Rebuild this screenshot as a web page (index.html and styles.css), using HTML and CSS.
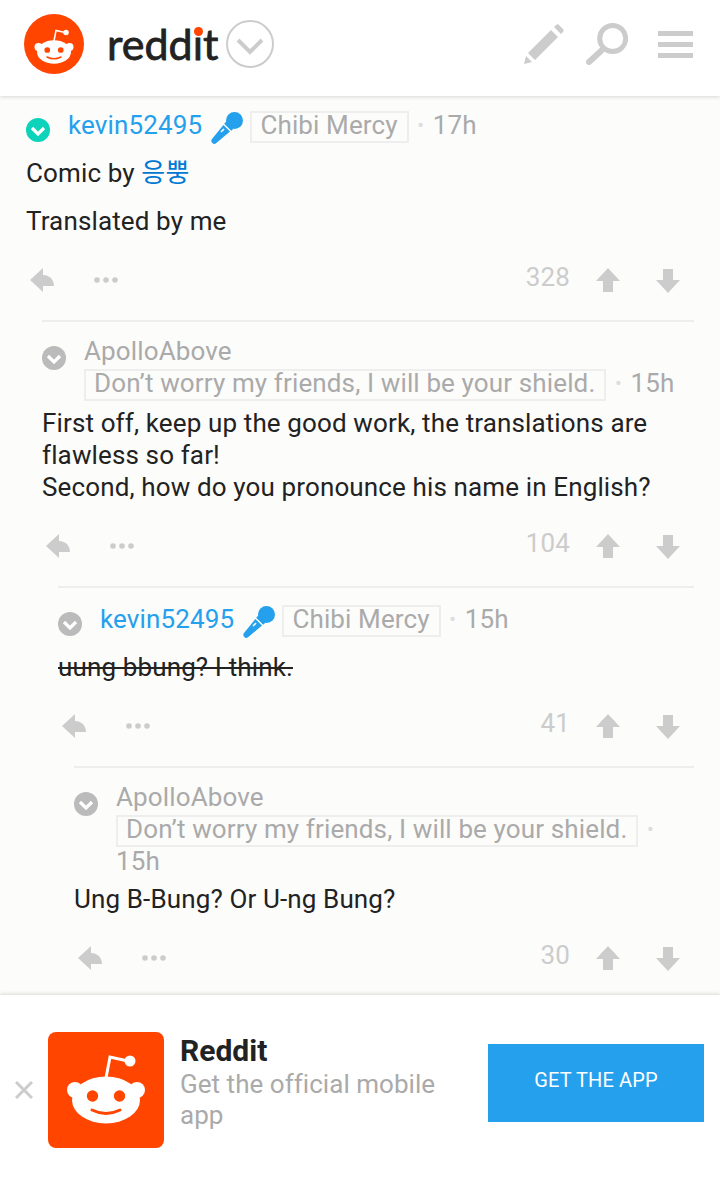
FILE: index.html
```html
<!DOCTYPE html>
<html lang="en">
<head>
  <meta charset="UTF-8">
  <meta name="viewport" content="width=device-width, initial-scale=1.0">
  <title>Comic by 응뿡</title>
  <link rel="stylesheet" href="styles.css">
</head>
<body>
  <svg class="sprites" width="0" height="0">
    <symbol id="snoo" viewBox="0 0 116 116">
      <path d="M58 46 L62 25 L80 29" fill="none" stroke="currentColor" stroke-width="3"/>
      <circle cx="82" cy="29" r="5.5" fill="currentColor"/>
      <circle cx="27" cy="58" r="8" fill="currentColor"/>
      <circle cx="89" cy="58" r="8" fill="currentColor"/>
      <ellipse cx="58" cy="68" rx="34" ry="23.5" fill="currentColor"/>
      <circle cx="44.5" cy="64" r="5.7" fill="#ff4500"/>
      <circle cx="71.5" cy="64" r="5.7" fill="#ff4500"/>
      <path d="M44 78 Q58 85 72 78" fill="none" stroke="#ff4500" stroke-width="3" stroke-linecap="round"/>
    </symbol>
    <symbol id="chev-badge" viewBox="0 0 24 24">
      <circle cx="12" cy="12" r="12" fill="currentColor"/>
      <path d="M6 10 L12 16 L18 10" fill="none" stroke="#fff" stroke-width="3.2"/>
    </symbol>
    <symbol id="mic" viewBox="0 0 32 32">
      <circle cx="23.5" cy="8.5" r="8.5" fill="#24a0ed"/>
      <path d="M15.2 9.6 L22.4 16.8 L20.2 18.8 L13.2 11.8 Z M12.4 13 L19 19.6 L5 31.2 C3.6 32.4 2.4 32 1.4 31 C0.2 29.8 -0.2 28.4 1 27 Z" fill="#24a0ed"/>
      <path d="M10 20 L13 17" stroke="#fff" stroke-width="1.6"/>
    </symbol>
    <symbol id="reply" viewBox="0 0 24 24">
      <path d="M0 12 L13 0 V7 C20 7 24 12 24 18 H13 V24 Z" fill="currentColor"/>
    </symbol>
    <symbol id="up" viewBox="0 0 24 24">
      <path d="M12 0 L24 13 H17 V24 H7 V13 H0 Z" fill="currentColor"/>
    </symbol>
    <symbol id="down" viewBox="0 0 24 24">
      <path d="M12 24 L24 11 H17 V0 H7 V11 H0 Z" fill="currentColor"/>
    </symbol>
    <symbol id="dots" viewBox="0 0 24 6">
      <circle cx="3" cy="3" r="2.8" fill="currentColor"/>
      <circle cx="12" cy="3" r="2.8" fill="currentColor"/>
      <circle cx="21" cy="3" r="2.8" fill="currentColor"/>
    </symbol>
  </svg>

  <header class="topbar">
    <svg class="logo-mark" viewBox="-2 -8 120 120">
      <circle cx="58" cy="52" r="60" fill="#ff4500"/>
      <use href="#snoo" width="116" height="116" class="snoo-white"/>
    </svg>
    <span class="wordmark">redd<span class="wordmark-i">i</span>t</span>
    <svg class="sub-toggle" viewBox="0 0 48 48">
      <circle cx="24" cy="24" r="23" fill="none" stroke="#ccc" stroke-width="2"/>
      <path d="M12 20 L24 32 L36 20" fill="none" stroke="#ccc" stroke-width="4"/>
    </svg>
    <nav class="topbar-icons">
      <svg class="icon-pencil" viewBox="0 0 40 40">
        <path d="M0 40 L2 32 L8 38 Z M4 29 L27 6 L34 13 L11 36 Z M30 3 L32 1 Q33 0 34.5 0.5 L39.5 5.5 Q40 7 39 8 L37 10 Z" fill="#ccc"/>
      </svg>
      <svg class="icon-search" viewBox="0 0 42 42">
        <circle cx="26.7" cy="15.5" r="13" fill="none" stroke="#ccc" stroke-width="5"/>
        <path d="M15 28 L3 39" stroke="#ccc" stroke-width="6" stroke-linecap="round"/>
      </svg>
      <div class="burger"><span></span><span></span><span></span></div>
    </nav>
  </header>

  <main class="thread">
    <article class="comment root">
      <div class="meta-row meta-row-mod">
        <svg class="badge badge-mod"><use href="#chev-badge"/></svg>
        <div class="meta">
          <a class="author">kevin52495</a>
          <svg class="mic"><use href="#mic"/></svg>
          <span class="flair">Chibi Mercy</span>
          <span class="dot">•</span>
          <span class="time">17h</span>
        </div>
      </div>
      <div class="text">
        <p>Comic by <a class="link">응뿡</a></p>
        <p>Translated by me</p>
      </div>
      <div class="actions">
        <svg class="act-reply"><use href="#reply"/></svg>
        <svg class="act-dots"><use href="#dots"/></svg>
        <span class="score">328</span>
        <svg class="vote"><use href="#up"/></svg>
        <svg class="vote vote-down"><use href="#down"/></svg>
      </div>

      <article class="comment">
        <div class="meta-row meta-row-flair-last">
          <svg class="badge"><use href="#chev-badge"/></svg>
          <div class="meta">
            <a class="author author-plain">ApolloAbove</a>
            <span class="flair">Don’t worry my friends, I will be your shield.</span>
            <span class="dot">•</span>
            <span class="time">15h</span>
          </div>
        </div>
        <div class="text">
          <p>First off, keep up the good work, the translations are flawless so far!<br>Second, how do you pronounce his name in English?</p>
        </div>
        <div class="actions">
          <svg class="act-reply"><use href="#reply"/></svg>
          <svg class="act-dots"><use href="#dots"/></svg>
          <span class="score">104</span>
          <svg class="vote"><use href="#up"/></svg>
          <svg class="vote vote-down"><use href="#down"/></svg>
        </div>

        <article class="comment">
          <div class="meta-row meta-row-mod">
            <svg class="badge"><use href="#chev-badge"/></svg>
            <div class="meta">
              <a class="author">kevin52495</a>
              <svg class="mic"><use href="#mic"/></svg>
              <span class="flair">Chibi Mercy</span>
              <span class="dot">•</span>
              <span class="time">15h</span>
            </div>
          </div>
          <div class="text">
            <p><del>uung bbung? I think.</del></p>
          </div>
          <div class="actions">
            <svg class="act-reply"><use href="#reply"/></svg>
            <svg class="act-dots"><use href="#dots"/></svg>
            <span class="score">41</span>
            <svg class="vote"><use href="#up"/></svg>
            <svg class="vote vote-down"><use href="#down"/></svg>
          </div>

          <article class="comment">
            <div class="meta-row">
              <svg class="badge"><use href="#chev-badge"/></svg>
              <div class="meta">
                <a class="author author-plain">ApolloAbove</a>
                <span class="flair">Don’t worry my friends, I will be your shield.</span>
                <span class="dot">•</span>
                <span class="time">15h</span>
              </div>
            </div>
            <div class="text">
              <p>Ung B-Bung? Or U-ng Bung?</p>
            </div>
            <div class="actions">
              <svg class="act-reply"><use href="#reply"/></svg>
              <svg class="act-dots"><use href="#dots"/></svg>
              <span class="score">30</span>
              <svg class="vote"><use href="#up"/></svg>
              <svg class="vote vote-down"><use href="#down"/></svg>
            </div>
          </article>
        </article>
      </article>
    </article>
  </main>

  <aside class="app-banner">
    <svg class="banner-close" viewBox="0 0 18 18">
      <path d="M1 1 L17 17 M17 1 L1 17" stroke="#ccc" stroke-width="3"/>
    </svg>
    <svg class="banner-icon"><use href="#snoo" class="snoo-white"/></svg>
    <div class="banner-copy">
      <strong class="banner-title">Reddit</strong>
      <p class="banner-sub">Get the official mobile app</p>
    </div>
    <a class="banner-btn">GET THE APP</a>
  </aside>
</body>
</html>
```

FILE: styles.css
```css
html, body {
  margin: 0;
  height: 100%;
}
body {
  display: flex;
  flex-direction: column;
  height: 1182px;
  overflow: hidden;
  background: #fcfcfb;
  color: #222;
  font-family: Roboto, "Noto Sans CJK KR", sans-serif;
  font-size: 26px;
  line-height: 32px;
  letter-spacing: 0.13px;
}
.sprites {
  display: none;
}
.snoo-white {
  color: #fff;
}

/* top bar */
.topbar {
  flex: none;
  display: flex;
  align-items: center;
  height: 96px;
  padding: 0 27px 8px 24px;
  box-sizing: border-box;
  background: #fff;
  box-shadow: 0 1px 4px rgba(0,0,0,0.15);
  position: relative;
  z-index: 1;
}
.logo-mark {
  width: 60px;
  height: 60px;
  margin-right: 23px;
}
.wordmark {
  width: 111px;
  font-family: Lato, sans-serif;
  font-size: 43px;
  line-height: 48px;
  font-weight: 400;
  -webkit-text-stroke: 0.8px #222;
  letter-spacing: 0;
  white-space: nowrap;
  color: #222;
}
.wordmark-i {
  position: relative;
}
.wordmark-i::after {
  content: "";
  position: absolute;
  left: 1px;
  top: 9px;
  width: 9px;
  height: 9px;
  border-radius: 50%;
  background: #ff4500;
}
.sub-toggle {
  width: 48px;
  height: 48px;
  margin-left: 8px;
}
.topbar-icons {
  margin-left: auto;
  display: flex;
  align-items: center;
}
.icon-pencil {
  width: 40px;
  height: 40px;
  margin-right: 22px;
}
.icon-search {
  width: 42px;
  height: 42px;
  margin-right: 30px;
}
.burger {
  display: flex;
  flex-direction: column;
  gap: 6px;
  width: 35px;
}
.burger span {
  height: 5px;
  background: #ccc;
}

/* comments */
.thread {
  flex: 1;
  min-height: 0;
}
.comment {
  margin-left: 16px;
  border-top: 2px solid #eee;
  padding-top: 13px;
}
.comment.root {
  margin-left: 0;
  border-top: 0;
  padding: 11px 26px 0 26px;
}
.meta-row {
  display: flex;
  margin-bottom: 6px;
}
.meta-row-flair-last {
  margin-bottom: 8px;
}
.meta-row-mod {
  padding-top: 2px;
  margin-bottom: 13px;
}
.badge {
  flex: none;
  width: 24px;
  height: 24px;
  margin: 11px 18px 0 0;
  color: #bbb;
}
.meta-row-mod .badge {
  margin-top: 9px;
}
.badge-mod {
  color: #0dd3bb;
}
.meta {
  min-width: 0;
  color: #aaa;
}
.author {
  color: #24a0ed;
}
.author-plain {
  display: block;
  color: #aaa;
}
.mic {
  width: 32px;
  height: 32px;
  vertical-align: top;
  margin: 3px 1px 0 2px;
}
.flair {
  display: inline-block;
  border: 2px solid #eee;
  padding: 0 9px 4px 8px;
  line-height: 24px;
  margin-bottom: -2px;
}
.dot {
  color: #ddd;
  font-size: 20px;
  margin: 0 2px;
  vertical-align: 2px;
}
.text p {
  margin: 0 0 16px;
}
.text p:last-child {
  margin-bottom: 0;
}
.link {
  color: #0079d3;
}
.actions {
  display: flex;
  align-items: center;
  height: 83px;
  padding: 3px 14px 0 4px;
  box-sizing: border-box;
  color: #ccc;
}
.act-reply {
  width: 24px;
  height: 24px;
  margin-right: 40px;
}
.act-dots {
  width: 24px;
  height: 6px;
}
.score {
  margin-left: auto;
  margin-top: -6px;
  color: #ccc;
  margin-right: 26px;
}
.vote {
  width: 24px;
  height: 24px;
}
.vote-down {
  margin-left: 36px;
  margin-top: 2px;
}

/* get the app banner */
.app-banner {
  flex: none;
  display: flex;
  align-items: flex-start;
  height: 187px;
  padding: 37px 16px 0 15px;
  box-sizing: border-box;
  background: #fff;
  box-shadow: 0 -1px 4px rgba(0,0,0,0.15);
  position: relative;
}
.banner-close {
  flex: none;
  width: 18px;
  height: 18px;
  margin: 49px 15px 0 0;
}
.banner-icon {
  flex: none;
  width: 116px;
  height: 116px;
  margin-right: 16px;
  border-radius: 8px;
  background: #ff4500;
}
.banner-copy {
  flex: 1;
  min-width: 0;
}
.banner-title {
  display: block;
  font-size: 30px;
  line-height: 37px;
  font-weight: 700;
  letter-spacing: 0;
}
.banner-sub {
  margin: 0;
  color: #aaa;
  line-height: 31px;
  letter-spacing: 0.04px;
}
.banner-btn {
  flex: none;
  width: 216px;
  height: 78px;
  margin: 12px 0 0 16px;
  background: #24a0ed;
  color: #fff;
  font-size: 20px;
  line-height: 72px;
  text-align: center;
}
```
